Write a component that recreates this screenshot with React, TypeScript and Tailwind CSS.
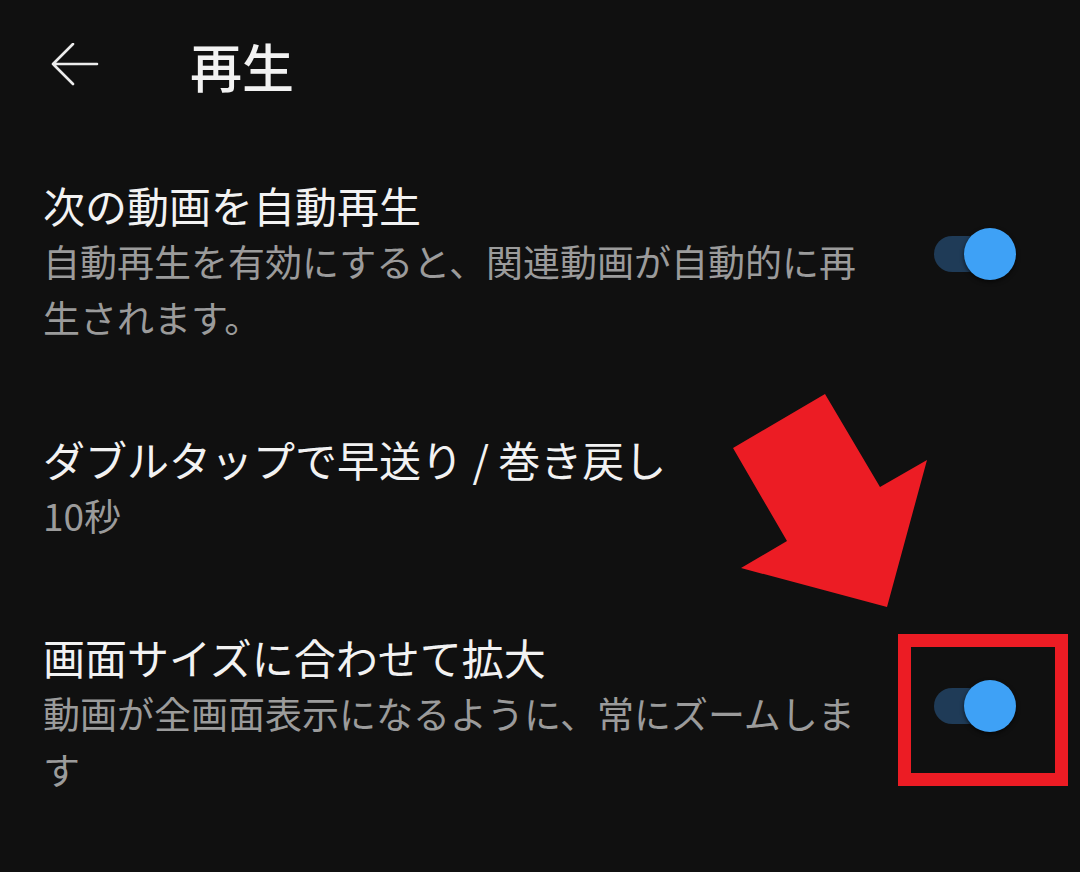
import React, { useState } from "react";

const jp = { fontFamily: '"Noto Sans CJK JP", "Noto Sans", sans-serif' };

interface SettingRowProps {
  title: string;
  lines: string;
  toggle?: boolean;
  on?: boolean;
  onToggle?: () => void;
}

function Toggle({ on, onClick }: { on: boolean; onClick?: () => void }) {
  return (
    <button onClick={onClick} className="flex items-center w-[84px] h-[52px] shrink-0">
      <span className={`w-[52px] h-[36px] rounded-full ${on ? "bg-[#1f3b57]" : "bg-[#3a3a3a]"}`} />
      <span
        className={`-ml-[22px] w-[52px] h-[52px] rounded-full shadow-[0_2px_4px_rgba(0,0,0,0.6)] ${
          on ? "bg-[#3ea1f6]" : "bg-[#bdbdbd]"
        }`}
      />
    </button>
  );
}

function SettingRow({ title, lines, toggle, on, onToggle }: SettingRowProps) {
  return (
    <div className="flex items-center pl-[43px] pr-[62px] py-[43px]">
      <div className="w-[840px]">
        <p className="text-[42px] leading-[56px] text-[#f2f2f2]">{title}</p>
        <p className="text-[37px] leading-[56px] text-[#9b9b9b]">{lines}</p>
      </div>
      {toggle && (
        <div className="ml-auto pb-[14px]">
          <Toggle on={!!on} onClick={onToggle} />
        </div>
      )}
    </div>
  );
}

export default function App() {
  const [autoplay, setAutoplay] = useState(true);
  const [zoom, setZoom] = useState(true);

  return (
    <div className="relative w-[1080px] h-[872px] bg-[#101010] overflow-hidden" style={jp}>
      {/* Header */}
      <div className="flex items-center h-[134px] pl-[50px] pb-[2px]">
        <svg width="50" height="46" viewBox="0 0 50 46" className="shrink-0">
          <path d="M3 21 H47 M23 1 L3 21 L23 41" fill="none" stroke="#ececec" strokeWidth="2.6" strokeLinecap="round" strokeLinejoin="round" />
        </svg>
        <h1 className="ml-[90px] text-[52px] font-medium text-[#f2f2f2] leading-none">再生</h1>
      </div>

      <SettingRow
        title="次の動画を自動再生"
        lines="自動再生を有効にすると、関連動画が自動的に再生されます。"
        toggle
        on={autoplay}
        onToggle={() => setAutoplay(!autoplay)}
      />
      <SettingRow title="ダブルタップで早送り / 巻き戻し" lines="10秒" />
      <SettingRow
        title="画面サイズに合わせて拡大"
        lines="動画が全画面表示になるように、常にズームします"
        toggle
        on={zoom}
        onToggle={() => setZoom(!zoom)}
      />

      {/* annotation overlay */}
      <svg className="absolute left-0 top-0 pointer-events-none" width="1080" height="872">
        <polygon
          points="733,448 825,394 880,487 927,460 887,607 741,568 787,541"
          fill="#ec1c24"
        />
      </svg>
      <div className="absolute left-[898px] top-[634px] w-[170px] h-[152px] border-[13px] border-[#ec1c24] pointer-events-none" />
    </div>
  );
}
